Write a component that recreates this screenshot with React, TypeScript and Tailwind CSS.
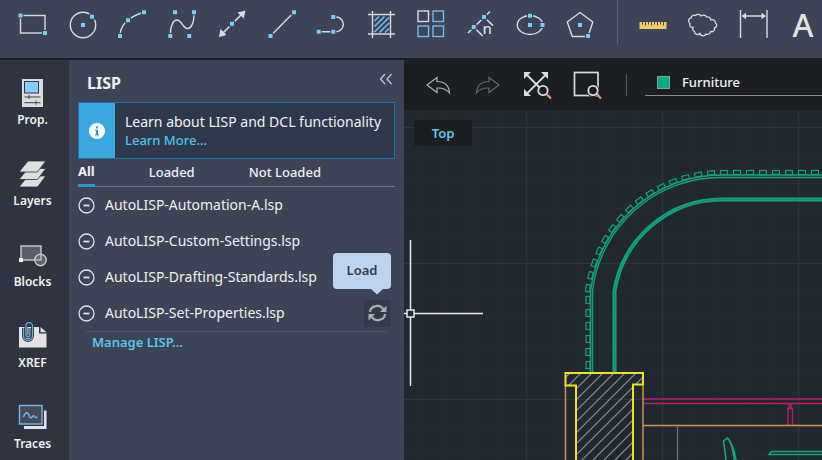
import type { ReactNode } from "react";

const files = [
  "AutoLISP-Automation-A.lsp",
  "AutoLISP-Custom-Settings.lsp",
  "AutoLISP-Drafting-Standards.lsp",
  "AutoLISP-Set-Properties.lsp",
];

interface IconProps {
  children: ReactNode;
  className?: string;
}

function Icon({ children, className = "text-[#d8dbe0]" }: IconProps) {
  return (
    <svg
      width="34"
      height="34"
      viewBox="0 0 34 34"
      fill="none"
      stroke="currentColor"
      strokeWidth="1.4"
      className={className}
      aria-hidden="true"
    >
      {children}
    </svg>
  );
}

// Blue grip drawn on the control points of the draw tools
function Grip({ x, y }: { x: number; y: number }) {
  return (
    <rect x={x - 2.5} y={y - 2.5} width="5" height="5" fill="#74d0fa" stroke="#3c4454" strokeWidth="1" />
  );
}

const drawTools = [
  {
    name: "Rectangle",
    icon: (
      <Icon>
        <rect x="4.5" y="7.5" width="24.5" height="17.5" />
        <Grip x={4.5} y={7.5} />
        <Grip x={29} y={25} />
      </Icon>
    ),
  },
  {
    name: "Circle",
    icon: (
      <Icon>
        <circle cx="17" cy="17" r="12.7" />
        <Grip x={17} y={17} />
        <Grip x={26} y={8.7} />
      </Icon>
    ),
  },
  {
    name: "Arc",
    icon: (
      <Icon>
        <path d="M5 26Q6 18 13 12.3Q19 7 29 4.3" />
        <Grip x={5} y={28} />
        <Grip x={13} y={12.3} />
        <Grip x={29} y={4.3} />
      </Icon>
    ),
  },
  {
    name: "Spline",
    icon: (
      <Icon>
        <path d="M5.3 26C5.5 17 8.5 12 12 12C16.5 12 18 20.5 22.5 20.5C26.5 20.5 29 14 29 7" />
        <Grip x={10} y={4.3} />
        <Grip x={29} y={4.3} />
        <Grip x={5.3} y={28} />
        <Grip x={24.3} y={28} />
      </Icon>
    ),
  },
  {
    name: "Construction line",
    icon: (
      <Icon>
        <path d="M7 26L27 6" strokeWidth="1.7" />
        <path d="M30.5 2.5L28.7 10.5L22.5 4.5ZM4 29L5.5 21L11.5 27Z" fill="currentColor" stroke="none" />
        <Grip x={17} y={15.7} />
      </Icon>
    ),
  },
  {
    name: "Line",
    icon: (
      <Icon>
        <path d="M5.5 28L29 4.3" />
        <Grip x={5.5} y={28} />
        <Grip x={29} y={4.3} />
      </Icon>
    ),
  },
  {
    name: "Polyline",
    icon: (
      <Icon>
        <path d="M4.7 23.7H19.3H22A7.3 7.3 0 0 0 22 9H19.3" />
        <Grip x={4.7} y={23.7} />
        <Grip x={19.3} y={23.7} />
        <Grip x={19.3} y={9} />
      </Icon>
    ),
  },
  {
    name: "Hatch",
    icon: (
      <Icon>
        <path
          d="M10.5 13L15 8.5M10.5 18.5L20.5 8.5M10.5 24L25 9.5M15.5 24.5L25 15M21 24.5L25 20.5"
          stroke="#6fbdf2"
          strokeWidth="1.6"
        />
        <path d="M8.5 3V30M26.5 3V30M4 6.5H31M4 26H31" />
      </Icon>
    ),
  },
  {
    name: "Array",
    icon: (
      <Icon>
        <rect x="4" y="3" width="10.5" height="10.5" />
        <g stroke="#6fbdea">
          <rect x="19" y="3" width="10.5" height="10.5" />
          <rect x="4" y="18" width="10.5" height="10.5" />
          <rect x="19" y="18" width="10.5" height="10.5" />
        </g>
      </Icon>
    ),
  },
  {
    name: "Multi-point polyline",
    icon: (
      <Icon>
        <path d="M27 3.5L5 25M21 9L30 17.7M10.7 19L19.7 28" strokeWidth="1.6" />
        <Grip x={21} y={9} />
        <Grip x={10.7} y={19} />
        <text
          x="19.5"
          y="26"
          fontSize="15"
          fill="currentColor"
          stroke="none"
          className="font-['Noto_Sans',sans-serif] font-medium"
        >
          n
        </text>
      </Icon>
    ),
  },
  {
    name: "Ellipse",
    icon: (
      <Icon>
        <ellipse cx="17" cy="17" rx="12.7" ry="9.5" />
        <Grip x={17} y={17} />
        <Grip x={17} y={7.7} />
        <Grip x={29.5} y={17} />
      </Icon>
    ),
  },
  {
    name: "Polygon",
    icon: (
      <Icon>
        <path d="M17 4.5L29.8 14L25 28.5H9.3L4.3 14Z" />
        <Grip x={17} y={17} />
        <Grip x={25} y={28} />
      </Icon>
    ),
  },
];

const annotateTools = [
  {
    name: "Measure",
    icon: (
      <Icon>
        <rect x="3.5" y="14" width="27" height="7" fill="#f3ca68" stroke="none" />
        <path
          d="M6.5 14V16.5M9.5 14V17.5M12.5 14V16.5M15.5 14V17.5M18.5 14V16.5M21.5 14V17.5M24.5 14V16.5M27.5 14V17.5"
          stroke="#4b4636"
          strokeWidth="1"
        />
      </Icon>
    ),
  },
  {
    name: "Revision cloud",
    icon: (
      <Icon>
        <path
          strokeWidth="1.3"
          d="M5 10A3.2 3.2 0 0 1 9.5 7.5A3.5 3.5 0 0 1 15 8A3.5 3.5 0 0 1 20.5 9A3.5 3.5 0 0 1 25 12A3.2 3.2 0 0 1 29.5 15A2.8 2.8 0 0 1 28.5 20A3 3 0 0 1 24.5 23.5A3 3 0 0 1 20 26A3.2 3.2 0 0 1 14 25.5A3.2 3.2 0 0 1 8.5 23.5A2.8 2.8 0 0 1 7 19.5A2.8 2.8 0 0 1 4 15.5A3 3 0 0 1 5 10Z"
        />
      </Icon>
    ),
  },
  {
    name: "Linear dimension",
    icon: (
      <Icon>
        <path d="M4.5 2V30M31 2V30M8 8H27" />
        <path d="M5.5 8L10 4.7V11.3ZM30 8L25.5 4.7V11.3Z" fill="currentColor" stroke="none" />
      </Icon>
    ),
  },
];

const palettes = [
  {
    name: "Prop.",
    icon: (
      <Icon>
        <rect x="6" y="3" width="21" height="28" fill="#dcdcdc" stroke="none" />
        <rect x="8.5" y="5.5" width="14" height="11.5" fill="#82d0fb" stroke="#30353f" strokeWidth="1" />
        <path d="M8.5 21H24.5M8.5 26.7H24.5M13 19V23M20 24.7V28.7" stroke="#3a3f48" strokeWidth="1" />
      </Icon>
    ),
  },
  {
    name: "Layers",
    icon: (
      <Icon>
        <g fill="#dedede" stroke="#2f3440" strokeWidth="0.8">
          <path d="M13 19H30.8L22.5 30H4Z" />
          <path d="M13 11.5H30.8L22.5 22.5H4Z" />
          <path d="M13 4H30.8L22.5 15H4Z" />
        </g>
      </Icon>
    ),
  },
  {
    name: "Blocks",
    icon: (
      <Icon className="text-[#c9ccd1]">
        <rect x="5" y="8" width="20" height="14" fill="#5b5f68" />
        <circle cx="24.5" cy="22" r="5.7" fill="#6b6f78" fillOpacity="0.8" />
        <path d="M25 16V22H19" strokeWidth="1" />
        <rect x="3" y="20" width="4" height="4" fill="#f1f1f1" stroke="none" />
      </Icon>
    ),
  },
  {
    name: "XREF",
    icon: (
      <Icon>
        <path d="M3 8H23V14.5H30.5V28.5H3Z" fill="#e3e3e3" stroke="none" />
        <path d="M24.5 8L30.5 13.2H24.5Z" fill="#e3e3e3" stroke="none" />
        <path
          d="M7.5 9V16.5A4.5 5 0 0 0 16.5 16.5V7A3.3 3.3 0 0 0 9.9 7V15.5A2 2.2 0 0 0 13.9 15.5V9"
          stroke="#30353f"
          strokeWidth="3"
        />
        <path
          d="M7.5 9V16.5A4.5 5 0 0 0 16.5 16.5V7A3.3 3.3 0 0 0 9.9 7V15.5A2 2.2 0 0 0 13.9 15.5V9"
          stroke="#65aede"
          strokeWidth="1.3"
        />
      </Icon>
    ),
  },
  {
    name: "Traces",
    icon: (
      <Icon>
        <rect x="8" y="10.5" width="22.5" height="18.5" fill="#e3e3e3" stroke="none" />
        <rect x="3.5" y="5.5" width="23" height="19" fill="#454b57" stroke="#2f3440" strokeWidth="3" />
        <rect x="3.5" y="5.5" width="22.5" height="18.5" fill="#454b57" stroke="#6bbce8" />
        <path
          d="M7.5 17C8.5 13 11 11.5 12.5 14C13.5 16 13.5 18.5 15.5 17.5C17 16.5 17.5 14.5 18.5 16.5C19.2 18 20.5 17.5 21.5 17"
          stroke="#6bbce8"
        />
      </Icon>
    ),
  },
];

const viewTools = [
  {
    name: "Undo",
    icon: (
      <Icon className="text-[#aeb1b6]">
        <path strokeWidth="1.2" d="M6 17L16 9.5V13.5C23 13.5 28 17 28.5 25C25.5 21 21.5 19.8 16 20V24.5Z" />
      </Icon>
    ),
  },
  {
    name: "Redo",
    icon: (
      <Icon className="text-[#64686d]">
        <path strokeWidth="1.2" d="M28 17L18 9.5V13.5C11 13.5 6 17 5.5 25C8.5 21 12.5 19.8 18 20V24.5Z" />
      </Icon>
    ),
  },
  {
    name: "Zoom extents",
    icon: (
      <Icon>
        <path strokeWidth="1.8" d="M5 6L18.5 19.5M25 6.5L5 26.5" />
        <path d="M3 4H10L3 11ZM27 4V11L20 4ZM3 28V21L10 28Z" fill="currentColor" stroke="none" />
        <circle cx="22" cy="22.5" r="4.7" fill="#1b1f23" strokeWidth="1.8" />
        <path d="M26 26.5L30 30.5" stroke="#d9a45f" strokeWidth="2.2" />
      </Icon>
    ),
  },
  {
    name: "Zoom window",
    icon: (
      <Icon>
        <rect x="3.5" y="4.5" width="23.5" height="23" strokeWidth="1.7" />
        <circle cx="22" cy="22.5" r="6.5" fill="#1b1f23" stroke="none" />
        <circle cx="22" cy="22.5" r="4.7" fill="#1b1f23" strokeWidth="1.8" />
        <path d="M26 26.5L30 30.5" stroke="#d9a45f" strokeWidth="2.2" />
      </Icon>
    ),
  },
];

// Small blocks that follow the outer edge: up the side, round the bend, along the top
const sideBlocks = Array.from({ length: 6 }, (_, i) => 190 + i * 13);
const bendBlocks = Array.from({ length: 15 }, (_, i) => -4.6 - i * 5.5);
const topBlocks = Array.from({ length: 80 }, (_, i) => 320 + i * 13);

function Drawing() {
  return (
    <svg className="absolute inset-0 h-full w-full" fill="none" role="img" aria-label="Floor plan">
      <defs>
        <pattern id="minor" x="122" y="17" width="27.2" height="27.2" patternUnits="userSpaceOnUse">
          <path d="M0 0.5H28M0.5 0V28" stroke="#252a33" />
        </pattern>
        <pattern id="major" x="122" y="17" width="136" height="136" patternUnits="userSpaceOnUse">
          <path d="M0 0.5H136M0.5 0V136" stroke="#2f3641" />
        </pattern>
        <pattern id="hatch" width="11" height="11" patternUnits="userSpaceOnUse">
          <path d="M-1 12L12 -1M-1 1L1 -1M10 12L12 10" stroke="#8d9096" strokeWidth="1.2" />
        </pattern>
      </defs>
      <rect width="100%" height="100%" fill="url(#minor)" />
      <rect width="100%" height="100%" fill="url(#major)" />

      <g stroke="#12a47e" strokeWidth="1.4">
        <path d="M186.500 263V181A132 132 0 0 1 318 65H1400M188.500 263V181A129 129 0 0 1 318 67.500H1400" />
        <path d="M210.500 263V181A109 109 0 0 1 318 89.500H1400" strokeWidth="4" />
        <path d="M210.500 263V181A109 109 0 0 1 318 89.500H1400" stroke="#0f8d6e" strokeWidth="1" />
        {sideBlocks.map((y) => (
          <rect key={y} x="182" y={y - 3.5} width="4" height="7" strokeWidth="1.2" />
        ))}
        {bendBlocks.map((angle) => (
          <rect
            key={angle}
            x="314.5"
            y="60.5"
            width="7"
            height="4"
            strokeWidth="1.2"
            transform={`rotate(${angle} 318 198)`}
          />
        ))}
        {topBlocks.map((x) => (
          <rect key={x} x={x - 3.5} y="60.5" width="7" height="4" strokeWidth="1.2" />
        ))}
      </g>

      <path
        d="M239 289H1400M239 293.500H1400M384 315V298.500L385 297V293.500M384 298.500H388.500M388.500 315V298.500L387 297V293.500"
        stroke="#bb1c6d"
        strokeWidth="1.4"
      />
      <path d="M161.500 275V1200M239 275V1200M239 315.500H1400" stroke="#cf924d" strokeWidth="1.5" />
      <path d="M273.500 316V1200" stroke="#72767d" strokeWidth="1.2" />
      <path
        d="M161.500 263H239V274.500H229V1200H172V275.500H161.500Z"
        fill="url(#hatch)"
        stroke="#ece41b"
        strokeWidth="2"
      />

      <g stroke="#12a47e" strokeWidth="1.6">
        <path d="M322 354C322 345 320.500 339 319.500 331L323.500 328C329 334 331 342 332.500 354M325 329.500C328 336 330 344 330.500 354" />
        <path d="M1400 341.500H367.500L365 344.500H1400" />
      </g>

      <g stroke="#e9eaec" strokeWidth="1.5">
        <path d="M6.500 130V200M6.500 207V276M0 203.500H3M10 203.500H79" />
        <rect x="3" y="200" width="7" height="7" />
      </g>
    </svg>
  );
}

export default function App() {
  return (
    <div className="flex h-screen flex-col overflow-hidden bg-[#3d4455] font-['Noto_Sans',sans-serif] text-sm text-[#eff1f4]">
      <header className="flex shrink-0 items-start border-b-2 border-[#1b2026] pb-3.5 pt-2">
        <div className="ml-4 flex w-[581px] shrink-0 justify-between">
          {drawTools.map((tool) => (
            <button key={tool.name} type="button" aria-label={tool.name}>
              {tool.icon}
            </button>
          ))}
        </div>
        <div className="-mt-2 ml-5 mr-[18px] h-11 w-px shrink-0 bg-[#5b6272]" />
        <div className="flex gap-4">
          {annotateTools.map((tool) => (
            <button key={tool.name} type="button" aria-label={tool.name}>
              {tool.icon}
            </button>
          ))}
          <button
            type="button"
            aria-label="Text"
            className="h-[34px] w-[34px] text-[32px] font-medium leading-[34px] text-[#e2e2e4]"
          >
            A
          </button>
        </div>
      </header>

      <div className="flex min-h-0 flex-1">
        <nav className="flex w-[69px] shrink-0 flex-col items-center gap-[27px] bg-[#2f3440] pr-1 pt-4">
          {palettes.map((palette) => (
            <button
              key={palette.name}
              type="button"
              className="flex flex-col items-center text-xs font-semibold leading-5"
            >
              {palette.icon}
              {palette.name}
            </button>
          ))}
        </nav>

        <aside className="w-[335px] shrink-0 px-[9px]">
          <div className="flex h-[42px] items-center justify-between pl-[9px] pr-0.5">
            <h2 className="pt-1 text-base font-bold">LISP</h2>
            <button type="button" aria-label="Collapse panel" className="pb-1">
              <svg
                width="14"
                height="12"
                viewBox="0 0 14 12"
                fill="none"
                stroke="#c3c8d1"
                strokeWidth="1.3"
                aria-hidden="true"
              >
                <path d="M6 1L1.500 6L6 11M12.500 1L8 6L12.500 11" />
              </svg>
            </button>
          </div>

          <div className="flex h-[57px] border border-[#1b75a8] bg-[#2e3a4b]">
            <div className="flex w-9 shrink-0 items-center justify-center bg-[#38a8de]">
              <svg width="16" height="16" viewBox="0 0 16 16" aria-hidden="true">
                <circle cx="8" cy="8" r="8" fill="#fff" />
                <path d="M7 3.500H9V5.500H7ZM6.200 6.700H9V11.200H10V12.500H6V11.200H7V8H6.200Z" fill="#2b94cb" />
              </svg>
            </div>
            <div className="flex flex-col justify-center whitespace-nowrap pl-2.5 leading-[18px]">
              <p>Learn about LISP and DCL functionality</p>
              <a href="#learn" className="text-[13px] font-medium text-[#54c1ec]">
                Learn More...
              </a>
            </div>
          </div>

          <div role="tablist" className="flex h-7 border-b border-[#757c89] text-[13px]">
            <button
              type="button"
              role="tab"
              aria-selected="true"
              className="-mb-px mr-[54px] border-b-[3px] border-[#2797d3] font-bold"
            >
              All
            </button>
            <button type="button" role="tab" aria-selected="false" className="mr-[54px] font-medium">
              Loaded
            </button>
            <button type="button" role="tab" aria-selected="false" className="font-medium">
              Not Loaded
            </button>
          </div>

          <ul>
            {files.map((file, index) => (
              <li key={file} className="flex h-9 items-center gap-2.5">
                <svg width="17" height="17" viewBox="0 0 17 17" fill="none" stroke="#dfe2e7" aria-hidden="true">
                  <circle cx="8.5" cy="8.5" r="7.5" strokeWidth="1.3" />
                  <path d="M5.500 8.500H11.500" strokeWidth="1.8" />
                </svg>
                <span>{file}</span>
                {index === files.length - 1 && (
                  <div className="relative ml-auto mr-1">
                    <button
                      type="button"
                      aria-label="Load"
                      className="flex h-[27px] w-[27px] items-center justify-center bg-[#353b49]"
                    >
                      <svg
                        width="19"
                        height="18"
                        viewBox="0 0 19 18"
                        fill="none"
                        stroke="#a9adb6"
                        strokeWidth="2.2"
                        aria-hidden="true"
                      >
                        <path d="M2 8C2.500 1.500 12 -0.500 15.500 5.500M17 10C16.500 16.500 7 18.500 3.500 12.500" />
                        <path d="M18.500 1.500V8H12ZM0.500 16.500V10H7Z" fill="#a9adb6" stroke="none" />
                      </svg>
                    </button>
                    <div
                      role="tooltip"
                      className="absolute bottom-[38px] right-0 flex h-9 w-[58px] items-center justify-center rounded-sm bg-[#bfd3ef] text-[13px] font-semibold text-[#323c4b]"
                    >
                      Load
                      <svg
                        width="12"
                        height="6"
                        viewBox="0 0 12 6"
                        className="absolute right-2 top-full"
                        aria-hidden="true"
                      >
                        <path d="M0 0H12L6 5.500Z" fill="#bfd3ef" />
                      </svg>
                    </div>
                  </div>
                )}
              </li>
            ))}
          </ul>

          <div className="mx-2 border-t border-[#515968] pl-1.5">
            <a href="#manage" className="text-[13px] font-semibold leading-5 text-[#59c4e9]">
              Manage LISP...
            </a>
          </div>
        </aside>

        <main className="flex min-w-0 flex-1 flex-col overflow-hidden">
          <div className="flex h-[50px] shrink-0 items-center bg-[#1b1f23] pl-[17px]">
            <div className="flex shrink-0 gap-4">
              {viewTools.map((tool) => (
                <button key={tool.name} type="button" aria-label={tool.name}>
                  {tool.icon}
                </button>
              ))}
            </div>
            <div className="ml-[21px] mr-[18px] h-[22px] w-px shrink-0 bg-[#565a5f]" />
            <label className="mb-3.5 mt-2 flex h-[26px] flex-1 items-center gap-3 self-end border-b border-[#868a8f] pl-3">
              <span className="h-[13px] w-[13px] shrink-0 border border-[#8f9d99] bg-[#00ac81]" />
              <select aria-label="Layer" className="w-full appearance-none bg-transparent text-[13px] font-medium">
                <option>Furniture</option>
              </select>
            </label>
          </div>
          <div className="relative flex-1 bg-[#222830] p-2.5">
            <Drawing />
            <button
              type="button"
              className="relative h-[26px] w-[58px] bg-[#1b1f23] text-[13px] font-semibold text-[#6ac4ea]"
            >
              Top
            </button>
          </div>
        </main>
      </div>
    </div>
  );
}
